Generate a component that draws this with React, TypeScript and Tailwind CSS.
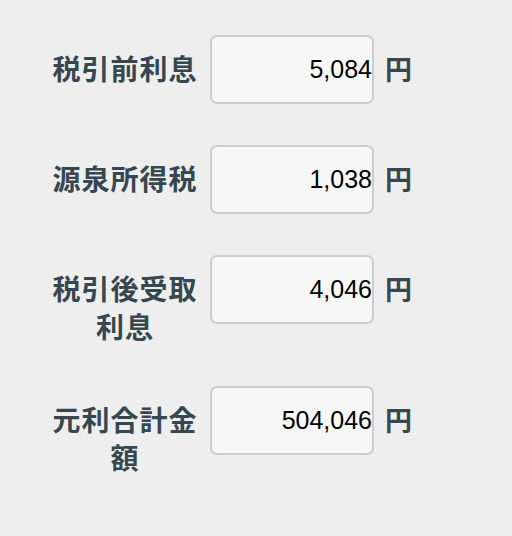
const rows = [
  { label: "税引前利息", value: "5,084" },
  { label: "源泉所得税", value: "1,038" },
  { label: "税引後受取利息", value: "4,046" },
  { label: "元利合計金額", value: "504,046" },
]

const App = () => {
  return (
    <div className="min-h-[536px] w-[512px] bg-[#eeeeee] pl-[50px] pt-[35px]">
      <div className="flex flex-col gap-[41px]">
        {rows.map((row) => (
          <div key={row.label} className="flex items-start">
            <div
              className="w-[150px] pt-[14px] text-center text-[28px] leading-[38px] font-bold tracking-[1px] text-[#37474f]"
              style={{ fontFamily: '"Noto Sans CJK JP", sans-serif' }}
            >
              {row.label}
            </div>
            <input
              readOnly
              value={row.value}
              className="ml-[10px] h-[69px] w-[164px] rounded-[7px] border-2 border-[#cccccc] bg-[#f7f7f7] pr-0 text-right text-[25px] text-black outline-none"
              style={{ fontFamily: '"Liberation Sans", Arial, sans-serif' }}
            />
            <div
              className="ml-[11px] flex h-[69px] items-center text-[27px] font-bold text-[#37474f]"
              style={{ fontFamily: '"Noto Sans CJK JP", sans-serif' }}
            >
              円
            </div>
          </div>
        ))}
      </div>
    </div>
  )
}

export default App
